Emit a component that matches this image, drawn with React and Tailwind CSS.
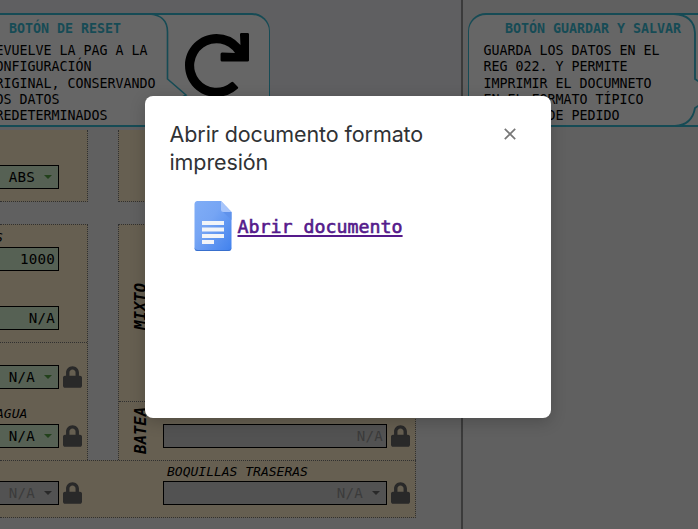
import React from "react";
import { FaRedo, FaLock } from "react-icons/fa";

function Field({ value, wide = false, select = false, disabled = false }) {
  return (
    <div
      className={`flex h-6 shrink-0 items-center justify-end border border-black text-[14.2px] tracking-[0.2px] ${
        wide ? "w-[224px]" : "w-[59px] border-l-0"
      } ${disabled ? "bg-[#525252] text-[#3b3b3b]" : "bg-[#566154] text-black"} ${select ? "pr-[6px]" : "pr-[3px]"}`}
    >
      <span className="pt-[2px]">{value}</span>
      {select && (
        <svg className={`ml-[9px] h-1 w-2 ${disabled ? "text-[#292929]" : "text-[#23421c]"}`} viewBox="0 0 8 4">
          <path d="M0 0h8L4 4z" fill="currentColor" />
        </svg>
      )}
    </div>
  );
}

function Lock() {
  return <FaLock className="ml-1 h-[22px] w-[19px] shrink-0 text-[#292929]" />;
}

function VerticalLabel({ children }) {
  return (
    <span className="rotate-180 text-[15.5px] leading-[14px] font-bold italic [writing-mode:vertical-rl]">
      {children}
    </span>
  );
}

function ResetCard() {
  return (
    <div className="relative mt-[13px] flex h-[114px] w-[270px] rounded-r-[18px] border-y-2 border-r-[1.5px] border-[#164b55] bg-[#666666]">
      <svg className="absolute -top-[2px] left-0 h-[114px] w-[200px]" viewBox="0 0 200 114" fill="none" stroke="#164b55" strokeWidth="1.6">
        <path d="M140 1h9Q167.500 2 167.500 19V66L186 82L167.500 92V96Q166 112 149 113" />
      </svg>
      <div className="w-[184px] shrink-0 pt-[6px]">
        <h2 className="ml-[9px] text-[13.3px] leading-[16px] font-bold whitespace-nowrap text-[#164b55]">BOTÓN DE RESET</h2>
        <p className="mt-[6px] -ml-[12.5px] text-[13.3px] leading-[16.3px] whitespace-nowrap">
          DEVUELVE LA PAG A LA<br />CONFIGURACIÓN<br />ORIGINAL, CONSERVANDO<br />LOS DATOS<br />PREDETERMINADOS
        </p>
      </div>
      <FaRedo className="mt-[18px] h-[65px] w-[65px] shrink-0" />
    </div>
  );
}

function SaveCard() {
  return (
    <div className="relative mt-[13px] ml-[5px] h-[114px] w-[260px] rounded-l-[18px] border-y-2 border-l-[1.5px] border-[#164b55] bg-[#666666] pt-[6px]">
      <svg className="absolute -top-[2px] left-[160px] h-[114px] w-[80px]" viewBox="0 0 80 114" fill="none" stroke="#164b55" strokeWidth="1.8">
        <path d="M30 1h15Q65 2 66 20V66L72 70M72 91L66 95Q63 112 46 113H20" />
      </svg>
      <h2 className="ml-[36px] text-[13.3px] leading-[16px] font-bold whitespace-nowrap text-[#164b55]">BOTÓN GUARDAR Y SALVAR</h2>
      <p className="mt-[6px] ml-[14.5px] text-[13.3px] leading-[16.3px] whitespace-nowrap">
        GUARDA LOS DATOS EN EL<br />REG 022. Y PERMITE<br />IMPRIMIR EL DOCUMNETO<br />EN EL FORMATO TÍPICO<br />DE HOJA DE PEDIDO
      </p>
    </div>
  );
}

function Dialog() {
  return (
    <div className="absolute top-[96px] left-[145px] h-[322px] w-[406px] rounded-lg bg-white shadow-[0_4px_16px_rgba(0,0,0,0.2)]">
      <div className="flex items-start justify-between pt-[24px] pr-[35px] pl-[24.500px]">
        <h1 className="w-[280px] font-['Inter',sans-serif] text-[21.5px] leading-[28px] tracking-[-0.1px] text-[#303235]">
          Abrir documento formato impresión
        </h1>
        <svg className="mt-[8px] h-3 w-3" viewBox="0 0 12 12" stroke="#777" strokeWidth="1.7">
          <path d="M.8.8l10.400 10.400M11.200.8L.8 11.200" />
        </svg>
      </div>
      <div className="mt-[25px] ml-[49px] flex items-center">
        <svg className="h-[50px] w-[38px]" viewBox="0 0 38 50">
          <defs>
            <linearGradient id="sheet" x1="0" y1="0" x2="1" y2="1">
              <stop offset="0" stopColor="#80adf6" />
              <stop offset=".4" stopColor="#76a5f4" />
              <stop offset="1" stopColor="#4181ed" />
            </linearGradient>
          </defs>
          <path d="M3.500 0H27L37.500 11V46.500Q37.500 50 34 50H3.500Q.5 50 .5 46.500V3.500Q.5 0 3.500 0z" fill="url(#sheet)" />
          <path d="M27 0L37.500 11H29.500Q27 11 27 8.500z" fill="#a8c5fa" />
          <path d="M29 11H37.500V19z" fill="#5f92eb" />
          <path d="M.5 46.500Q.5 50 3.500 50H34Q37.500 50 37.500 46.500Q37 49 34 49H3.500Q1 49 .5 46.500" fill="#386fcd" />
          <path d="M8 20h22v4H8zM8 26.500h22v4H8zM8 33h22v4H8zM8 39h12v4H8z" fill="#f1f4f8" />
        </svg>
        <a className="mt-[2px] ml-[5.5px] text-[18.3px] leading-[24px] text-[#551a8b] underline decoration-2 underline-offset-[2px] [-webkit-text-stroke:0.6px_#551a8b]" href="#">
          Abrir documento
        </a>
      </div>
    </div>
  );
}

export default function App() {
  return (
    <div className="relative flex h-[529px] w-[698px] overflow-hidden bg-[#606060] font-['DejaVu_Sans_Mono','Liberation_Mono',monospace] text-black">
      <div className="flex w-[461px] shrink-0 flex-col">
        <div className="h-[130px] bg-[#5f5f61]">
          <ResetCard />
        </div>
        <div className="flex h-[72px] gap-[30px]">
          <div className="w-[88px] border-r border-b border-dotted border-[#303030] bg-[#665f51] pt-[35px]">
            <Field value="ABS" select />
          </div>
          <div className="w-[298px] border-x border-b border-dotted border-[#303030] bg-[#665f51]" />
        </div>
        <div className="mt-[22px] flex h-[236px] gap-[30px]">
          <div className="flex w-[88px] flex-col border-t border-r border-dotted border-[#303030] bg-[#665f51]">
            <div className="flex h-[117px] shrink-0 flex-col">
              <span className="mt-[4px] -ml-[5px] text-[13px] leading-[18px] italic">S</span>
              <Field value="1000" />
              <div className="mt-[35px]"><Field value="N/A" /></div>
            </div>
            <div className="flex h-[119px] flex-col border-t border-dotted border-[#303030] pt-[22px]">
              <div className="flex items-center"><Field value="N/A" select /><Lock /></div>
              <span className="mt-[15px] -ml-[4px] text-[13px] leading-[20px] italic">AGUA</span>
              <div className="flex items-center"><Field value="N/A" select /><Lock /></div>
            </div>
          </div>
          <div className="w-[298px] border-x border-t border-dotted border-[#303030] bg-[#665f51]">
            <div className="flex h-[176px] items-start pt-[58px] pl-[15px]">
              <VerticalLabel>MIXTO</VerticalLabel>
            </div>
            <div className="flex h-[59px] border-t border-dotted border-[#303030] pl-[15px]">
              <div className="flex w-[29px] shrink-0 items-start pt-[5px]"><VerticalLabel>BATEA</VerticalLabel></div>
              <div className="mt-[22px] flex h-6 items-center"><Field value="N/A" disabled wide /><Lock /></div>
            </div>
          </div>
        </div>
        <div className="flex h-[58px] w-[416px] border-y border-r border-dotted border-[#303030] bg-[#665f51]">
          <div className="flex w-[163px] pt-[20px]">
            <div className="flex h-6 items-center"><Field value="N/A" select disabled /><Lock /></div>
          </div>
          <div className="flex flex-col">
            <span className="ml-[4px] pt-[1px] text-[13px] leading-[19px] italic">BOQUILLAS TRASERAS</span>
            <div className="flex h-6 items-center"><Field value="N/A" select disabled wide /><Lock /></div>
          </div>
        </div>
      </div>
      <div className="w-[2px] shrink-0 bg-[#3b3b3b]" />
      <div className="grow">
        <SaveCard />
      </div>
      <Dialog />
    </div>
  );
}
